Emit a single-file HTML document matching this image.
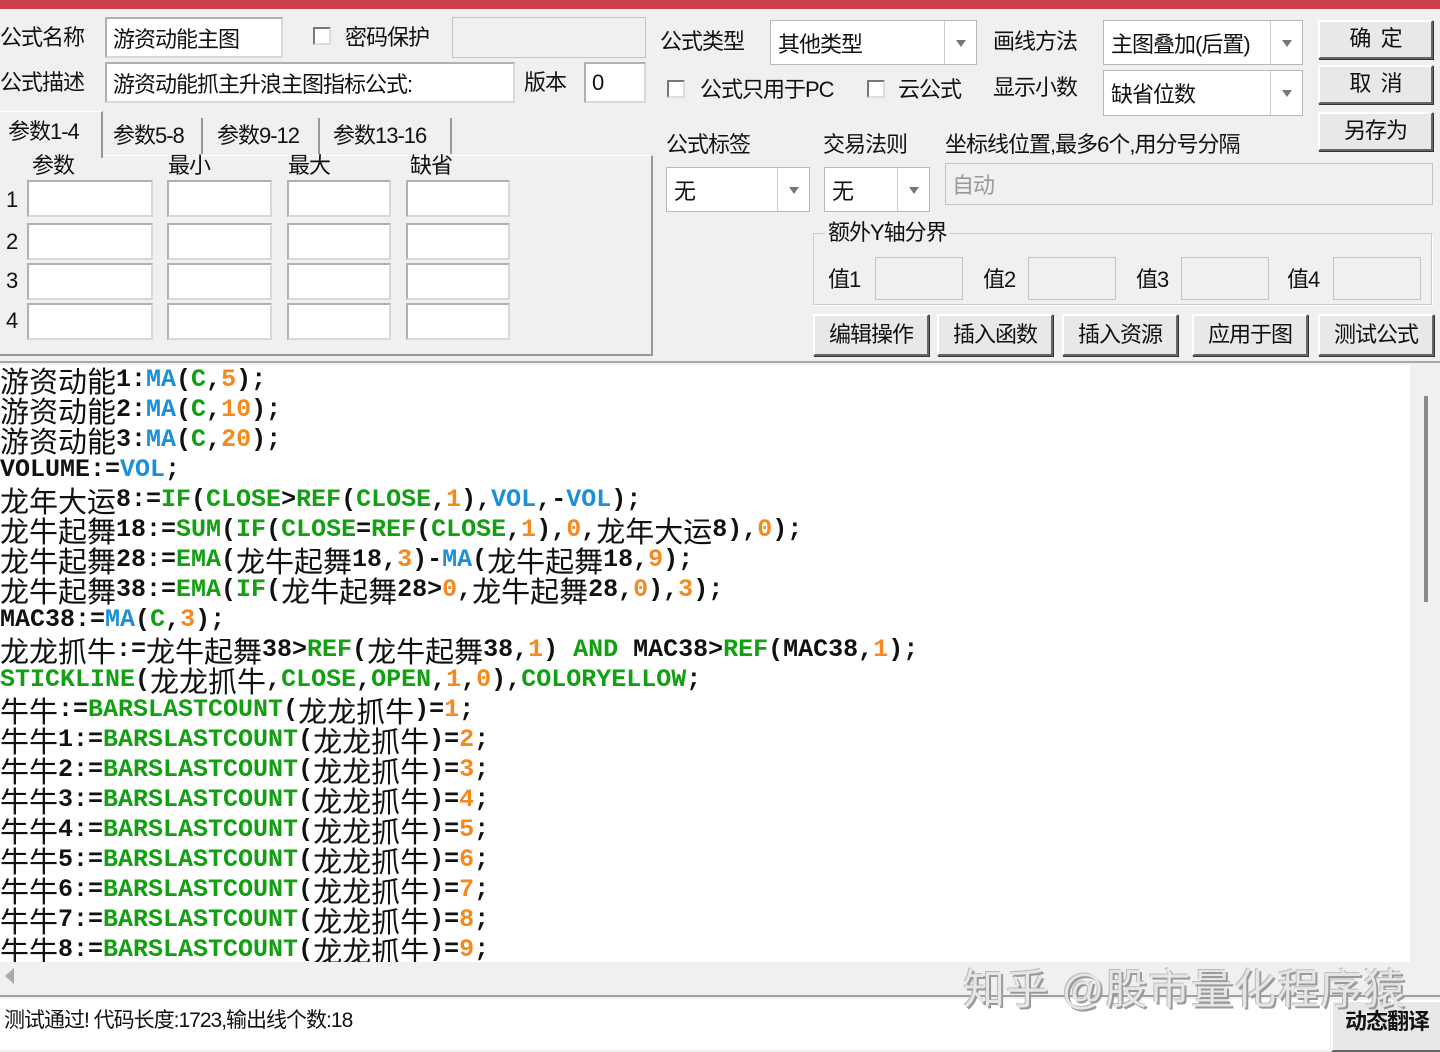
<!DOCTYPE html>
<html><head><meta charset="utf-8">
<style>
*{box-sizing:border-box;margin:0;padding:0}
body{width:1440px;height:1050px;background:#f0f0f0;position:relative;overflow:hidden;font-family:"Liberation Sans","Noto Sans CJK SC",sans-serif;font-size:22px;color:#111}
.a{position:absolute}
.lbl{position:absolute;font-size:22px;line-height:24px;white-space:nowrap;letter-spacing:-1px}
.in{position:absolute;background:#fff;border:2px solid #b0b0b0;border-right-color:#d8d8d8;border-bottom-color:#d8d8d8}
.in span{position:absolute;left:6px;top:50%;transform:translateY(-50%);font-size:22px;white-space:nowrap;letter-spacing:-1px}
.dis{background:#f0f0f0;border:1.5px solid #c4c4c4}
.cb{position:absolute;width:18px;height:18px;background:#fff;border:2px solid #777;border-right-color:#ddd;border-bottom-color:#ddd}
.combo{position:absolute;background:#fff;border:1.5px solid #b8b8b8}
.combo span{position:absolute;left:7px;top:50%;transform:translateY(-50%);font-size:22px;white-space:nowrap;letter-spacing:-1px}
.combo i{position:absolute;right:0;top:0;bottom:0;width:32px;border-left:1.5px solid #ccc}
.combo i:after{content:"";position:absolute;left:11px;top:50%;margin-top:-3px;border:5px solid transparent;border-top:7px solid #777;border-bottom:0}
.btn{position:absolute;background:#e8e8e8;border:2px solid #fff;border-right-color:#666;border-bottom-color:#666;box-shadow:1px 1px 0 #333;text-align:center;font-size:22px;letter-spacing:-1px}
.code{position:absolute;left:0;top:365px;width:1410px;height:597px;background:#fff;overflow:hidden;font-family:"Liberation Mono",monospace;font-weight:bold;font-size:25px;color:#111}
.code div{height:30px;line-height:30px;white-space:pre;overflow:visible}
.z{font-family:"Noto Sans CJK SC",sans-serif;font-weight:normal;font-size:29px;line-height:30px;height:30px;vertical-align:top;display:inline-block;width:29px;text-align:center}
.b{color:#1c8fd6}.g{color:#12a012}.o{color:#f4891e}
</style></head><body>
<div class="a" style="left:0;top:0;width:1440px;height:9px;background:#c9414b"></div>

<div class="lbl" style="left:0;top:26px">公式名称</div>
<div class="in" style="left:105px;top:17px;width:178px;height:41px"><span>游资动能主图</span></div>
<div class="cb" style="left:313px;top:27px"></div>
<div class="lbl" style="left:345px;top:26px">密码保护</div>
<div class="in dis" style="left:452px;top:17px;width:194px;height:41px"></div>

<div class="lbl" style="left:0;top:71px">公式描述</div>
<div class="in" style="left:105px;top:62px;width:410px;height:41px"><span>游资动能抓主升浪主图指标公式:</span></div>
<div class="lbl" style="left:524px;top:71px">版本</div>
<div class="in" style="left:584px;top:62px;width:62px;height:41px"><span>0</span></div>

<div class="a" style="left:0;top:155px;width:653px;height:201px;border-top:1.5px solid #fff;border-right:2px solid #999;border-bottom:2px solid #999"></div>
<div class="a" style="left:0;top:111px;width:103px;height:47px;background:#f0f0f0;border-right:2px solid #999;border-top:1px solid #fff"></div>
<div class="lbl" style="left:8px;top:120px">参数1-4</div>
<div class="a" style="left:201px;top:118px;width:2px;height:36px;background:#999"></div>
<div class="a" style="left:318px;top:118px;width:2px;height:36px;background:#999"></div>
<div class="a" style="left:450px;top:118px;width:2px;height:36px;background:#999"></div>
<div class="lbl" style="left:113px;top:124px">参数5-8</div>
<div class="lbl" style="left:217px;top:124px">参数9-12</div>
<div class="lbl" style="left:333px;top:124px">参数13-16</div>

<div class="lbl" style="left:32px;top:154px">参数</div>
<div class="lbl" style="left:168px;top:154px">最小</div>
<div class="lbl" style="left:288px;top:154px">最大</div>
<div class="lbl" style="left:410px;top:154px">缺省</div>

<div class="lbl" style="left:6px;top:188px">1</div>
<div class="lbl" style="left:6px;top:230px">2</div>
<div class="lbl" style="left:6px;top:269px">3</div>
<div class="lbl" style="left:6px;top:309px">4</div>
<div class="in" style="left:27px;top:180px;width:126px;height:37px"></div>
<div class="in" style="left:167px;top:180px;width:105px;height:37px"></div>
<div class="in" style="left:287px;top:180px;width:104px;height:37px"></div>
<div class="in" style="left:406px;top:180px;width:104px;height:37px"></div>
<div class="in" style="left:27px;top:223px;width:126px;height:37px"></div>
<div class="in" style="left:167px;top:223px;width:105px;height:37px"></div>
<div class="in" style="left:287px;top:223px;width:104px;height:37px"></div>
<div class="in" style="left:406px;top:223px;width:104px;height:37px"></div>
<div class="in" style="left:27px;top:263px;width:126px;height:37px"></div>
<div class="in" style="left:167px;top:263px;width:105px;height:37px"></div>
<div class="in" style="left:287px;top:263px;width:104px;height:37px"></div>
<div class="in" style="left:406px;top:263px;width:104px;height:37px"></div>
<div class="in" style="left:27px;top:303px;width:126px;height:37px"></div>
<div class="in" style="left:167px;top:303px;width:105px;height:37px"></div>
<div class="in" style="left:287px;top:303px;width:104px;height:37px"></div>
<div class="in" style="left:406px;top:303px;width:104px;height:37px"></div>

<div class="lbl" style="left:660px;top:30px">公式类型</div>
<div class="combo" style="left:770px;top:20px;width:207px;height:45px"><span>其他类型</span><i></i></div>
<div class="lbl" style="left:993px;top:30px">画线方法</div>
<div class="combo" style="left:1103px;top:20px;width:200px;height:45px"><span>主图叠加(后置)</span><i></i></div>
<div class="btn" style="left:1318px;top:20px;width:115px;height:39px;line-height:34px">确&nbsp;&nbsp;定</div>
<div class="btn" style="left:1318px;top:65px;width:115px;height:39px;line-height:34px">取&nbsp;&nbsp;消</div>
<div class="btn" style="left:1318px;top:112px;width:115px;height:39px;line-height:34px">另存为</div>

<div class="cb" style="left:667px;top:80px"></div>
<div class="lbl" style="left:700px;top:78px">公式只用于PC</div>
<div class="cb" style="left:867px;top:80px"></div>
<div class="lbl" style="left:898px;top:78px">云公式</div>
<div class="lbl" style="left:993px;top:76px">显示小数</div>
<div class="combo" style="left:1103px;top:70px;width:200px;height:46px"><span>缺省位数</span><i></i></div>

<div class="lbl" style="left:666px;top:133px">公式标签</div>
<div class="lbl" style="left:823px;top:133px">交易法则</div>
<div class="lbl" style="left:945px;top:133px">坐标线位置,最多6个,用分号分隔</div>
<div class="combo" style="left:666px;top:167px;width:144px;height:45px"><span>无</span><i></i></div>
<div class="combo" style="left:824px;top:167px;width:106px;height:45px"><span>无</span><i></i></div>
<div class="in dis" style="left:945px;top:163px;width:488px;height:42px"><span style="color:#999">自动</span></div>

<div class="a" style="left:813px;top:233px;width:620px;height:73px;border:1.5px solid #ccc;border-right-color:#fff;border-bottom-color:#fff;box-shadow:inset -1px -1px 0 #ccc"></div>
<div class="lbl" style="left:825px;top:221px;background:#f0f0f0;padding:0 3px">额外Y轴分界</div>
<div class="lbl" style="left:828px;top:268px">值1</div>
<div class="lbl" style="left:983px;top:268px">值2</div>
<div class="lbl" style="left:1136px;top:268px">值3</div>
<div class="lbl" style="left:1287px;top:268px">值4</div>
<div class="in dis" style="left:875px;top:257px;width:88px;height:43px"></div>
<div class="in dis" style="left:1028px;top:257px;width:88px;height:43px"></div>
<div class="in dis" style="left:1181px;top:257px;width:88px;height:43px"></div>
<div class="in dis" style="left:1333px;top:257px;width:88px;height:43px"></div>

<div class="btn" style="left:813px;top:314px;width:116px;height:42px;line-height:38px">编辑操作</div>
<div class="btn" style="left:937px;top:314px;width:116px;height:42px;line-height:38px">插入函数</div>
<div class="btn" style="left:1062px;top:314px;width:116px;height:42px;line-height:38px">插入资源</div>
<div class="btn" style="left:1192px;top:314px;width:116px;height:42px;line-height:38px">应用于图</div>
<div class="btn" style="left:1318px;top:314px;width:116px;height:42px;line-height:38px">测试公式</div>

<div class="a" style="left:0;top:361px;width:1440px;height:2px;background:#a8a8a8"></div>

<div class="code"><div><span class="z">游</span><span class="z">资</span><span class="z">动</span><span class="z">能</span>1:<span class="b">MA</span>(<span class="g">C</span>,<span class="o">5</span>);</div><div><span class="z">游</span><span class="z">资</span><span class="z">动</span><span class="z">能</span>2:<span class="b">MA</span>(<span class="g">C</span>,<span class="o">10</span>);</div><div><span class="z">游</span><span class="z">资</span><span class="z">动</span><span class="z">能</span>3:<span class="b">MA</span>(<span class="g">C</span>,<span class="o">20</span>);</div><div>VOLUME:=<span class="b">VOL</span>;</div><div><span class="z">龙</span><span class="z">年</span><span class="z">大</span><span class="z">运</span>8:=<span class="g">IF</span>(<span class="g">CLOSE</span>&gt;<span class="g">REF</span>(<span class="g">CLOSE</span>,<span class="o">1</span>),<span class="b">VOL</span>,-<span class="b">VOL</span>);</div><div><span class="z">龙</span><span class="z">牛</span><span class="z">起</span><span class="z">舞</span>18:=<span class="g">SUM</span>(<span class="g">IF</span>(<span class="g">CLOSE</span>=<span class="g">REF</span>(<span class="g">CLOSE</span>,<span class="o">1</span>),<span class="o">0</span>,<span class="z">龙</span><span class="z">年</span><span class="z">大</span><span class="z">运</span>8),<span class="o">0</span>);</div><div><span class="z">龙</span><span class="z">牛</span><span class="z">起</span><span class="z">舞</span>28:=<span class="g">EMA</span>(<span class="z">龙</span><span class="z">牛</span><span class="z">起</span><span class="z">舞</span>18,<span class="o">3</span>)-<span class="b">MA</span>(<span class="z">龙</span><span class="z">牛</span><span class="z">起</span><span class="z">舞</span>18,<span class="o">9</span>);</div><div><span class="z">龙</span><span class="z">牛</span><span class="z">起</span><span class="z">舞</span>38:=<span class="g">EMA</span>(<span class="g">IF</span>(<span class="z">龙</span><span class="z">牛</span><span class="z">起</span><span class="z">舞</span>28&gt;<span class="o">0</span>,<span class="z">龙</span><span class="z">牛</span><span class="z">起</span><span class="z">舞</span>28,<span class="o">0</span>),<span class="o">3</span>);</div><div>MAC38:=<span class="b">MA</span>(<span class="g">C</span>,<span class="o">3</span>);</div><div><span class="z">龙</span><span class="z">龙</span><span class="z">抓</span><span class="z">牛</span>:=<span class="z">龙</span><span class="z">牛</span><span class="z">起</span><span class="z">舞</span>38&gt;<span class="g">REF</span>(<span class="z">龙</span><span class="z">牛</span><span class="z">起</span><span class="z">舞</span>38,<span class="o">1</span>) <span class="g">AND</span> MAC38&gt;<span class="g">REF</span>(MAC38,<span class="o">1</span>);</div><div><span class="g">STICKLINE</span>(<span class="z">龙</span><span class="z">龙</span><span class="z">抓</span><span class="z">牛</span>,<span class="g">CLOSE</span>,<span class="g">OPEN</span>,<span class="o">1</span>,<span class="o">0</span>),<span class="g">COLORYELLOW</span>;</div><div><span class="z">牛</span><span class="z">牛</span>:=<span class="g">BARSLASTCOUNT</span>(<span class="z">龙</span><span class="z">龙</span><span class="z">抓</span><span class="z">牛</span>)=<span class="o">1</span>;</div><div><span class="z">牛</span><span class="z">牛</span>1:=<span class="g">BARSLASTCOUNT</span>(<span class="z">龙</span><span class="z">龙</span><span class="z">抓</span><span class="z">牛</span>)=<span class="o">2</span>;</div><div><span class="z">牛</span><span class="z">牛</span>2:=<span class="g">BARSLASTCOUNT</span>(<span class="z">龙</span><span class="z">龙</span><span class="z">抓</span><span class="z">牛</span>)=<span class="o">3</span>;</div><div><span class="z">牛</span><span class="z">牛</span>3:=<span class="g">BARSLASTCOUNT</span>(<span class="z">龙</span><span class="z">龙</span><span class="z">抓</span><span class="z">牛</span>)=<span class="o">4</span>;</div><div><span class="z">牛</span><span class="z">牛</span>4:=<span class="g">BARSLASTCOUNT</span>(<span class="z">龙</span><span class="z">龙</span><span class="z">抓</span><span class="z">牛</span>)=<span class="o">5</span>;</div><div><span class="z">牛</span><span class="z">牛</span>5:=<span class="g">BARSLASTCOUNT</span>(<span class="z">龙</span><span class="z">龙</span><span class="z">抓</span><span class="z">牛</span>)=<span class="o">6</span>;</div><div><span class="z">牛</span><span class="z">牛</span>6:=<span class="g">BARSLASTCOUNT</span>(<span class="z">龙</span><span class="z">龙</span><span class="z">抓</span><span class="z">牛</span>)=<span class="o">7</span>;</div><div><span class="z">牛</span><span class="z">牛</span>7:=<span class="g">BARSLASTCOUNT</span>(<span class="z">龙</span><span class="z">龙</span><span class="z">抓</span><span class="z">牛</span>)=<span class="o">8</span>;</div><div><span class="z">牛</span><span class="z">牛</span>8:=<span class="g">BARSLASTCOUNT</span>(<span class="z">龙</span><span class="z">龙</span><span class="z">抓</span><span class="z">牛</span>)=<span class="o">9</span>;</div></div>

<div class="a" style="left:1410px;top:365px;width:30px;height:597px;background:#f0f0f0"></div>
<div class="a" style="left:1424px;top:396px;width:4px;height:206px;background:#8a8a8a"></div>
<div class="a" style="left:0;top:962px;width:1410px;height:30px;background:#f0f0f0"></div>
<div class="a" style="left:5px;top:968px;border:8px solid transparent;border-right:9px solid #aaa;border-left:0"></div>
<div class="a" style="left:0;top:995px;width:1440px;height:2px;background:#a0a0a0"></div>
<div class="a" style="left:0;top:999px;width:1330px;height:51px;background:#fff"></div>
<div class="lbl" style="left:4px;top:1009px;font-size:21px">测试通过! 代码长度:1723,输出线个数:18</div>
<div class="btn" style="left:1331px;top:1000px;width:112px;height:52px;line-height:40px;font-weight:bold">动态翻译</div>

<div class="a" style="left:963px;top:966px;font-size:42px;line-height:48px;color:#e6e6e6;text-shadow:2px 2px 0 #9a9a9a,-1px -1px 0 #bbb;letter-spacing:1px;white-space:nowrap">知乎 @股市量化程序猿</div>
</body></html>
